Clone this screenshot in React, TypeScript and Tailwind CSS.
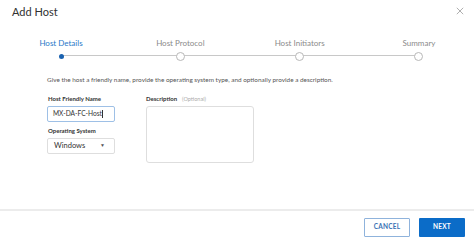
export default function App() {
  const steps = ['Host Details', 'Host Protocol', 'Host Initiators', 'Summary'];

  return (
    <div className="w-[474px] h-[242px] bg-white flex flex-col font-['Lato','Open_Sans',sans-serif] text-[#333] overflow-hidden">
      {/* Header */}
      <div className="flex items-center justify-between pl-[12px] pr-[10px] h-[22px]">
        <div className="text-[11px] leading-none text-[#313131]">Add Host</div>
        <svg width="8" height="8" viewBox="0 0 10 10" className="text-[#9a9a9a]">
          <path d="M1 1 L9 9 M9 1 L1 9" stroke="currentColor" strokeWidth="1" />
        </svg>
      </div>

      {/* Stepper */}
      <div className="relative mx-[41px] w-[398px] mt-[16px]">
        <div className="absolute left-[20px] right-[20px] top-[17px] h-px bg-[#c8c8c8]" />
        <div className="relative flex justify-between">
          {steps.map((s, i) => (
            <div key={s} className="w-[40px] flex flex-col items-center">
              <div
                className={`whitespace-nowrap text-[8px] leading-[10px] ${
                  i === 0 ? 'text-[#2878c8]' : 'text-[#8a8a8a]'
                }`}
              >
                {s}
              </div>
              <div className="h-[10px] mt-[3px] flex items-center">
                {i === 0 ? (
                  <div className="w-[5px] h-[5px] rounded-full bg-[#1a62b0]" />
                ) : (
                  <div className="w-[9px] h-[9px] rounded-full border border-[#b8b8b8] bg-white" />
                )}
              </div>
            </div>
          ))}
        </div>
      </div>

      {/* Body */}
      <div className="pl-[47px] mt-[14px] text-[6.4px] leading-[9px] text-[#555]">
        Give the host a friendly name, provide the operating system type, and optionally provide a description.
      </div>

      <div className="flex pl-[47px] mt-[11px] gap-[31px]">
        <div className="flex flex-col w-[68px]">
          <div className="text-[6px] leading-[8px] font-bold text-[#333] pl-px">Host Friendly Name</div>
          <div className="mt-[3px] h-[16px] border border-[#9ec0e6] rounded-[2px] flex items-center pl-[5px] text-[6.6px] text-[#333]">
            MX-DA-FC-Host<span className="w-px h-[8px] bg-[#333]" />
          </div>
          <div className="mt-[5px] text-[6px] leading-[8px] font-bold text-[#333] pl-px">Operating System</div>
          <div className="mt-[3px] h-[16px] border border-[#dedede] rounded-[2px] flex items-center justify-between pl-[6px] pr-[9px] text-[7.5px] text-[#333]">
            <span>Windows</span>
            <span className="text-[5px] text-[#555]">▼</span>
          </div>
        </div>
        <div className="flex flex-col">
          <div className="text-[6px] leading-[8px] text-[#333]">
            <span className="font-bold">Description</span>
            <span className="ml-[5px] text-[#aaa] text-[5.5px]">(Optional)</span>
          </div>
          <div className="mt-[3px] w-[108px] h-[57px] border border-[#dedede] rounded-[3px]" />
        </div>
      </div>

      {/* Footer */}
      <div className="mt-auto border-t-[2px] border-[#ececec] h-[33px] flex items-center justify-end gap-[9px] pr-[9px] pt-[1px]">
        <button className="w-[46px] h-[19px] border border-[#8fb3dc] text-[#3a72b4] text-[6.5px] font-bold tracking-[0.2px] rounded-[1px] bg-white">
          CANCEL
        </button>
        <button className="w-[46px] h-[19px] bg-[#0b6cc8] text-white text-[6.5px] font-bold tracking-[0.2px] rounded-[1px]">
          NEXT
        </button>
      </div>
    </div>
  );
}
